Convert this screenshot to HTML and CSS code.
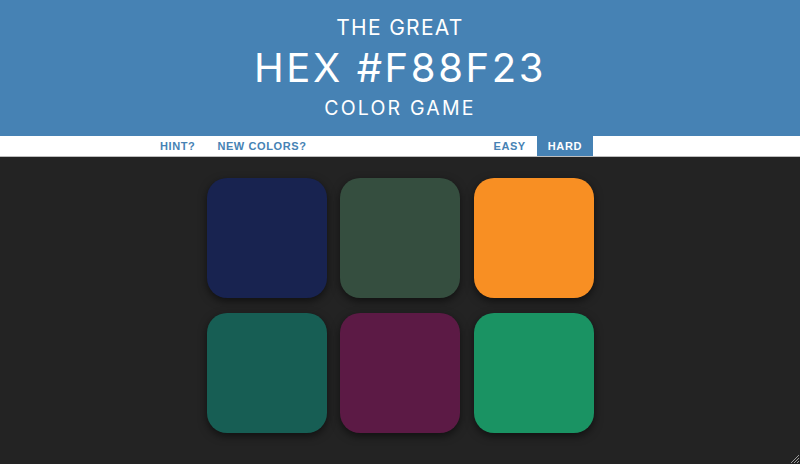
FILE: index.html
```html
<!DOCTYPE html>
<html>
<head>
<meta charset="utf-8">
<title>The Great Hex Color Game</title>
<link rel="stylesheet" href="styles.css">
</head>
<body>
<header class="header">
  <h1 class="title">
    <span class="title-small">The Great</span>
    <span class="title-big">Hex #F88F23</span>
    <span class="title-small title-last">Color Game</span>
  </h1>
</header>
<nav class="stripe">
  <div class="stripe-group">
    <button class="btn">Hint?</button>
    <button class="btn">New Colors?</button>
  </div>
  <div class="stripe-group">
    <button class="btn">Easy</button>
    <button class="btn btn-selected">Hard</button>
  </div>
</nav>
<main class="board">
  <div class="square sq-navy"></div>
  <div class="square sq-moss"></div>
  <div class="square sq-orange"></div>
  <div class="square sq-teal"></div>
  <div class="square sq-plum"></div>
  <div class="square sq-green"></div>
</main>
<svg class="grip" width="12" height="12" viewBox="0 0 12 12">
  <path d="M11 3 L3 11 M11 6 L6 11 M11 9 L9 11" stroke="#9a9a9a" stroke-width="1"/>
</svg>
</body>
</html>
```
FILE: styles.css
```css
html, body {
  margin: 0;
  padding: 0;
}
body {
  background: #232323;
  height: 464px;
  overflow: hidden;
  font-family: "Inter", "Open Sans", "Liberation Sans", sans-serif;
}
.header {
  background: #4682b4;
  height: 136px;
  box-sizing: border-box;
  padding-top: 17px;
}
.title {
  margin: 0;
  color: #fff;
  font-weight: 400;
  text-transform: uppercase;
  text-align: center;
}
.title-small {
  display: block;
  font-size: 21px;
  line-height: 21px;
  letter-spacing: 1.3px;
}
.title-big {
  display: block;
  font-size: 40px;
  line-height: 40px;
  letter-spacing: 2.6px;
  margin: 9.5px 0 11.7px;
}
.title-last {
  font-size: 19.5px;
  line-height: 19.5px;
  letter-spacing: 2.2px;
}
.stripe {
  background: #fff;
  height: 20px;
  display: flex;
  justify-content: space-between;
  padding: 0 207px 0 149px;
  border-bottom: 1px solid #bdbdbd;
}
.stripe-group {
  display: flex;
}
.btn {
  border: none;
  background: none;
  margin: 0;
  height: 20px;
  padding: 0 11px;
  font-family: "Liberation Sans", Arial, sans-serif;
  font-weight: 700;
  font-size: 11px;
  letter-spacing: 0.6px;
  text-transform: uppercase;
  color: #4682b4;
}
.btn-selected {
  background: #4682b4;
  color: #fff;
}
.board {
  display: grid;
  grid-template-columns: repeat(3, 120px);
  grid-auto-rows: 120px;
  column-gap: 13.5px;
  row-gap: 15px;
  justify-content: center;
  padding-top: 21px;
}
.square {
  border-radius: 20px;
  box-shadow: 0 3px 8px rgba(0, 0, 0, 0.55);
}
.sq-navy { background: #182350; }
.sq-moss { background: #354e3f; }
.sq-orange { background: #f88f23; }
.sq-teal { background: #175e54; }
.sq-plum { background: #5c1a45; }
.sq-green { background: #1a9363; }
.grip {
  position: absolute;
  right: 0;
  bottom: 0;
}
```
